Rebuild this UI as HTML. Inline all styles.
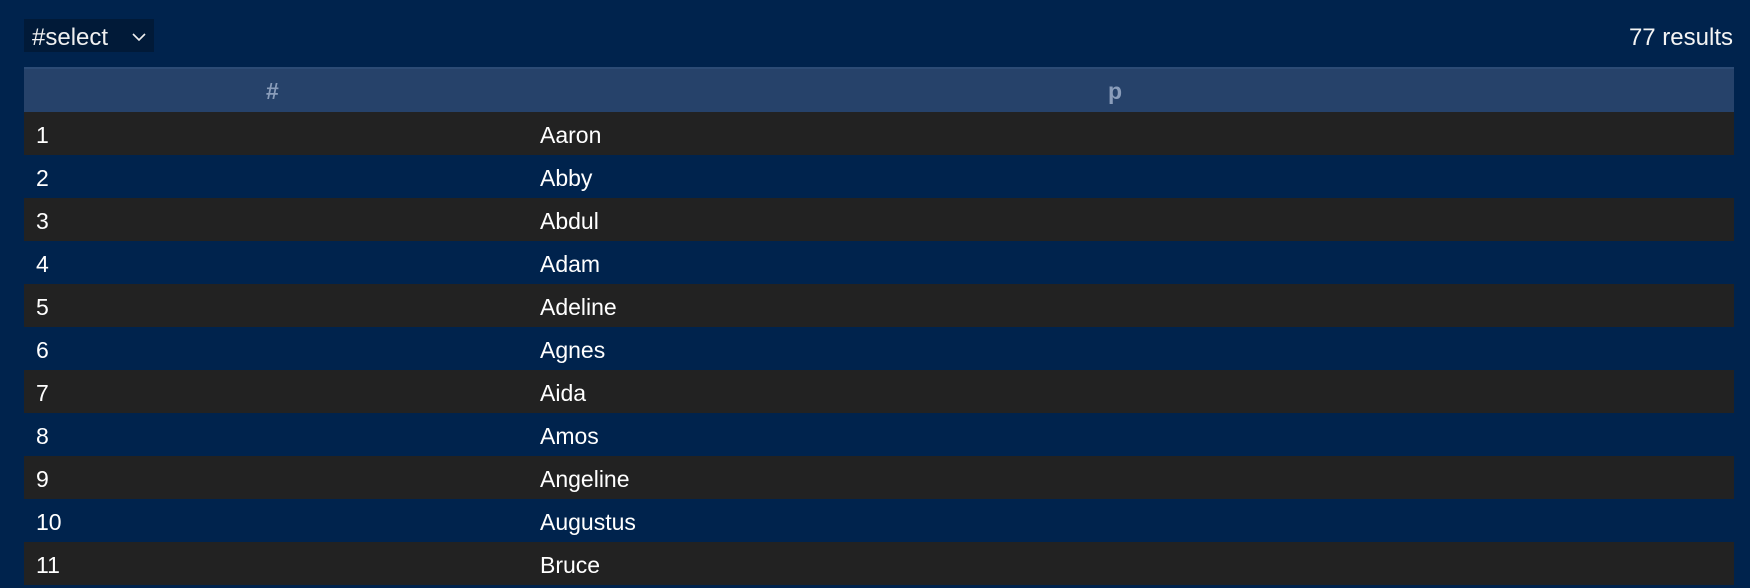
<!DOCTYPE html>
<html><head><style>
html,body{margin:0;padding:0;}
body{width:1750px;height:588px;background:#00234d;font-family:"Liberation Sans",sans-serif;color:#fff;position:relative;overflow:hidden;}
.sel{position:absolute;left:24px;top:19px;width:130px;height:33px;background:#011a38;}
.sel span{position:absolute;left:8px;top:5px;font-size:24px;color:#f0f0f0;}
.sel svg{position:absolute;left:106px;top:12px;}
.res{position:absolute;right:17px;top:24px;font-size:24px;color:#f4f4f4;}
.hdr{position:absolute;left:24px;top:67px;width:1710px;height:45px;background:#26426a;border-top:2px solid #2c4b75;box-sizing:border-box;}
.hdr b{position:absolute;top:9px;font-size:23px;color:#8a9dba;}
.row{position:absolute;left:24px;width:1710px;height:43px;font-size:23px;}
.row.d{background:#222222;}
.row .n{position:absolute;left:12px;top:10px;}
.row .p{position:absolute;left:516px;top:10px;}
</style></head><body>
<div class="sel"><span>#select</span><svg width="18" height="12" viewBox="0 0 18 12"><path d="M3 3 L9 9 L15 3" stroke="#f0f0f0" stroke-width="1.6" fill="none"/></svg></div>
<div class="res">77 results</div>
<div class="hdr"><b style="left:242px">#</b><b style="left:1084px">p</b></div>
<div class="row d" style="top:112px"><span class="n">1</span><span class="p">Aaron</span></div>
<div class="row" style="top:155px"><span class="n">2</span><span class="p">Abby</span></div>
<div class="row d" style="top:198px"><span class="n">3</span><span class="p">Abdul</span></div>
<div class="row" style="top:241px"><span class="n">4</span><span class="p">Adam</span></div>
<div class="row d" style="top:284px"><span class="n">5</span><span class="p">Adeline</span></div>
<div class="row" style="top:327px"><span class="n">6</span><span class="p">Agnes</span></div>
<div class="row d" style="top:370px"><span class="n">7</span><span class="p">Aida</span></div>
<div class="row" style="top:413px"><span class="n">8</span><span class="p">Amos</span></div>
<div class="row d" style="top:456px"><span class="n">9</span><span class="p">Angeline</span></div>
<div class="row" style="top:499px"><span class="n">10</span><span class="p">Augustus</span></div>
<div class="row d" style="top:542px"><span class="n">11</span><span class="p">Bruce</span></div>
</body></html>
